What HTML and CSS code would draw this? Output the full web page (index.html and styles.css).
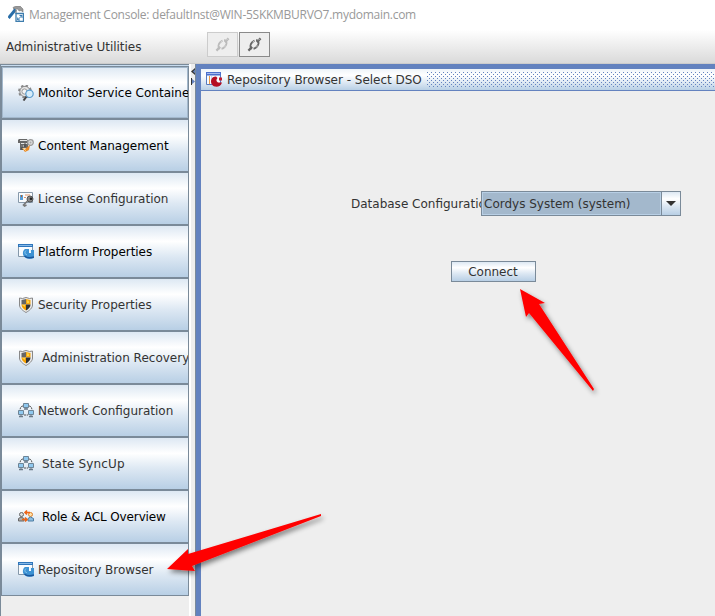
FILE: index.html
```html
<!DOCTYPE html>
<html lang="en">
<head>
<meta charset="utf-8">
<title>Management Console</title>
<link rel="stylesheet" href="styles.css">
</head>
<body>
<svg class="defs" width="0" height="0" aria-hidden="true">
  <defs>
    <symbol id="gear" viewBox="0 0 16 16">
      <circle cx="7" cy="6.5" r="5.2" fill="#e4e4e4" stroke="#8a8a8a" stroke-width="1"/>
      <circle cx="7" cy="6.5" r="6" fill="none" stroke="#888" stroke-width="1.8" stroke-dasharray="2.4 2.3"/>
      <circle cx="6.5" cy="6.5" r="2.6" fill="#f4f4f4" stroke="#999"/>
      <path d="M9 11 5.5 15.5" stroke="#444" stroke-width="2"/>
      <circle cx="11.5" cy="8.8" r="3.7" fill="#d5ecfa" stroke="#5a9bcd" stroke-width="1.2"/>
    </symbol>
    <symbol id="content" viewBox="0 0 16 16">
      <path d="M1 1h8l1 2v9H2V5H0V2z" fill="#686868"/>
      <path d="M2 2.5h7M3 5.5h6M3 8h3M4 10.5h4" stroke="#e5e5e5"/>
      <path d="M4 7v5M7 5v4" stroke="#444"/>
      <circle cx="12.5" cy="4.5" r="2.8" fill="#ddd" stroke="#999" stroke-width="1.200"/>
      <circle cx="12.5" cy="4.5" r="1" fill="#aaa"/>
      <path d="m4 10 3 1 5-4-1 5-4 2z" fill="#e98824"/><path d="m5 10.5 3 2" stroke="#ffe090"/>
    </symbol>
    <symbol id="license" viewBox="0 0 16 16">
      <path d="M.5 1.5h14v10H.5z" fill="#f9fbfd" stroke="#8799aa"/>
      <path d="M2 4h3v5H2z" fill="#579dd7"/><path d="M3 4h1v2H3z" fill="#b56732"/>
      <path d="M7 4h5M6 6.5h2" stroke="#df956d"/>
      <circle cx="12" cy="8" r="3" fill="#888" stroke="#555"/><circle cx="13" cy="7.8" r="1.3" fill="#222"/>
      <path d="m9.5 10-4 4 1 1 2-1" fill="none" stroke="#777" stroke-width="1.6"/>
    </symbol>
    <symbol id="browser" viewBox="0 0 16 16">
      <path d="M.5.5h14v12H.5z" fill="#f8fbfe" stroke="#8498aa"/><path d="M0 0h15v3H0z" fill="#2d75bb"/><path d="M1 1.500h13" stroke="#85b8e7"/>
      <path d="M7 5C5 6 4 10 6 12.500c2 2.500 6 3 10 1.500V6h-3v3h-2V5z" fill="#3d92d3"/><path d="M8 6.500c-2 2-1 4 1 4" fill="none" stroke="#8bcaf1"/><path d="M6.500 12c3 2.500 6 2 9.500 1" stroke="#1b569b" stroke-width="1.500" fill="none"/><path d="M12 5h1v3h-1z" fill="#e4f4ff"/>
    </symbol>
    <symbol id="red-browser" viewBox="0 0 16 16">
      <path d="M.5.5h14v12H.5z" fill="#f8fbfe" stroke="#577abd"/><path d="M0 0h15v3.500H0z" fill="#4c70cc"/><path d="M1 1.500h13" stroke="#a7bbef"/>
      <path d="M3.500 4v8" stroke="#ec9a45"/><path d="M5.500 4v8" stroke="#c8d4ee"/>
      <path d="M10 4.500c-5 0-6 5-4 8 2 3.500 9 3 10-2h-4c-2-1-2-3-.5-4.500z" fill="#b50e22"/><path d="M13 5.500h3v3h-3z" fill="#c21b2e"/>
    </symbol>
    <symbol id="shield" viewBox="0 0 16 16">
      <path d="m1.500 1 3 .5L8 .5l3.500 1 3-.5v7c0 3-3 5.500-6.500 7.500C4.500 13.500 1.500 11 1.500 8z" fill="#ededed" stroke="#888"/>
      <path d="M3.500 3 8 2v5.500H3.500z" fill="#666"/><path d="m8 2 4.500 1v4.500H8z" fill="#f5a611"/><path d="M3.500 7.500H8v6c-3-1.800-4.500-3.500-4.500-6z" fill="#f6a100"/><path d="M8 7.500h4.500c0 2.500-1.500 4.200-4.500 6z" fill="#333"/><path d="m9 3 2 1v2H9zM4 8h3v2z" fill="#ffd342"/>
    </symbol>
    <symbol id="network" viewBox="0 0 16 16">
      <path d="M5 3C3 3 2 5 2 7M11 3c2 0 3 2 3 4M6 12h4" fill="none" stroke="#555" stroke-dasharray="2 .7"/>
      <g fill="#8fc8ef" stroke="#6d8496"><path d="M5.500.5h5v4h-5zM.5 7.500h5v4h-5zM10.500 7.500h5v4h-5z"/></g>
      <path d="M6 6h4M1 13.500h4M11 13.500h4" stroke="#697988" stroke-width="1.3"/><path d="M8 5v1M3 12v1M13 12v1" stroke="#697988"/>
    </symbol>
    <symbol id="roles" viewBox="0 0 16 16">
      <circle cx="3.500" cy="5.500" r="2" fill="#ddd" stroke="#666"/><path d="M.5 12V9.500L3 8l3 1.500V12z" fill="#aaa" stroke="#666"/>
      <circle cx="12.500" cy="5.500" r="2" fill="#ffe0a8" stroke="#df8027"/><path d="M10 12V9.500L12.500 8l3 1.500V12z" fill="#8bbde1" stroke="#4e7da3"/>
      <path d="M12 3.500H7M9 1.500l-2 2 2 2M4 10.500h5M7 8.500l2 2-2 2" fill="none" stroke="#ed6417" stroke-width="1.600"/>
    </symbol>
    <symbol id="plug" viewBox="0 0 16 16">
      <path d="m1.500 14.500 4-4M10.500 5.500l4-4" stroke="currentColor" stroke-width="2.400"/>
      <ellipse cx="8" cy="8" rx="5.300" ry="3.400" transform="rotate(-50 8 8)" fill="none" stroke="currentColor" stroke-width="2" stroke-dasharray="11 1.500"/>
      <path d="m6 5.500 2-1.500M10 11l1.500-2M12 3.500l1.500-1.500" stroke="#ddd" stroke-width=".8"/>
    </symbol>
    <filter id="shade" x="-20%" y="-20%" width="150%" height="150%"><feDropShadow dx="2" dy="3" stdDeviation="2.500" flood-color="#000" flood-opacity=".48"/></filter>
  </defs>
</svg>
<div class="window">
  <header class="titlebar">
    <svg class="app-icon" viewBox="0 0 16 16">
      <path d="m5 1.500 3-1.500h4l3 3v3l-2-1.500-2 .5-1-2-4 .5z" fill="#999" stroke="#777" stroke-width=".6"/>
      <path d="m7.500 3.500-7 8.500" stroke="#286da8" stroke-width="3"/><path d="M8 4v4" stroke="#888" stroke-width="1.300"/>
      <path d="M8 7.500h7.500v8H8z" fill="#fff" stroke="#3e7dad" stroke-width="1.300"/>
      <path d="m9.500 14 4.500-4.500M9.700 11.500V14H12M11.500 9.500H14V12" fill="none" stroke="#3479b1"/>
    </svg>
    <span class="title">Management Console: defaultInst@WIN-5SKKMBURVO7.mydomain.com</span>
  </header>
  <div class="toolbar">
    <span class="toolbar-label">Administrative Utilities</span>
    <div class="tools">
      <button class="tool disabled" aria-label="Disconnect"><svg><use href="#plug"/></svg></button>
      <button class="tool" aria-label="Connection"><svg><use href="#plug"/></svg></button>
    </div>
  </div>
  <main class="workspace">
    <nav class="sidebar">
      <button class="item dark focused"><svg><use href="#gear"/></svg><span>Monitor Service Container</span></button>
      <button class="item dark"><svg><use href="#content"/></svg><span>Content Management</span></button>
      <button class="item"><svg><use href="#license"/></svg><span>License Configuration</span></button>
      <button class="item dark"><svg><use href="#browser"/></svg><span class="snug">Platform Properties</span></button>
      <button class="item"><svg><use href="#shield"/></svg><span>Security Properties</span></button>
      <button class="item indented"><svg><use href="#shield"/></svg><span>Administration Recovery</span></button>
      <button class="item"><svg><use href="#network"/></svg><span>Network Configuration</span></button>
      <button class="item indented"><svg><use href="#network"/></svg><span class="loose">State SyncUp</span></button>
      <button class="item dark indented"><svg><use href="#roles"/></svg><span class="tight">Role &amp; ACL Overview</span></button>
      <button class="item"><svg><use href="#browser"/></svg><span class="snug">Repository Browser</span></button>
    </nav>
    <div class="divider"><svg viewBox="0 0 4 20"><path d="m4 0-4 3.500L4 7z" fill="#333"/><path d="m2 3.500 2-2v4z" fill="#6382bf"/><path d="m0 10 4 3.500L0 17z" fill="#6382bf"/><path d="M0 10h1v7H0z" fill="#333"/></svg></div>
    <section class="panel">
      <header class="panel-head"><svg class="panel-icon"><use href="#red-browser"/></svg><h1>Repository Browser - Select DSO</h1><svg class="dots" shape-rendering="crispEdges"><defs><pattern id="grip" width="4" height="4" patternUnits="userSpaceOnUse"><path d="M0 0h1v1H0zM2 2h1v1H2z" fill="#6382bf"/></pattern></defs><rect width="100%" height="100%" fill="url(#grip)"/></svg></header>
      <div class="content">
        <div class="field"><label>Database Configuration</label><div class="combo"><span class="value">Cordys System (system)</span><span class="drop"><svg viewBox="0 0 10 5"><path d="M0 0h10L5 5z"/></svg></span></div></div>
        <button class="connect">Connect</button>
      </div>
    </section>
  </main>
  <svg class="arrows" viewBox="0 0 715 616" aria-hidden="true">
    <g fill="#f00" filter="url(#shade)"><path d="m520 289 25 14-6 1 55 85-1 2-64-78-3 4z"/><path d="m167 569 21-20v5l133-40v2l-129 50 3 5z"/></g>
  </svg>
</div>
</body>
</html>
```

FILE: styles.css
```css
* { box-sizing: border-box; }
body { margin: 0; font: 12px/16px "DejaVu Sans", sans-serif; color: #333; background: #eee; }
button { font: inherit; color: inherit; margin: 0; border-radius: 0; }
.defs { position: absolute; }
.window { position: relative; width: 715px; height: 616px; overflow: hidden; display: flex; flex-direction: column; }
.titlebar { height: 30px; flex: none; display: flex; gap: 5px; padding: 6px 0 0 8px; background: #fff; }
.app-icon { width: 16px; height: 16px; }
.title { font: 12px/17px "Open Sans", sans-serif; letter-spacing: -.27px; color: #999; white-space: nowrap; }
.toolbar { height: 34px; flex: none; display: flex; align-items: flex-start; background: linear-gradient(#fff, #dadada); border-bottom: 1px solid #ccc; }
.toolbar-label { width: 201px; padding-left: 6px; margin-top: 9px; margin-right: 6px; white-space: nowrap; letter-spacing: -.04px; }
.tools { display: flex; gap: 1px; margin-top: 2px; }
.tool { width: 31px; height: 25px; padding: 0; border: 1px solid #8a8a8a; background: #eee; display: grid; place-items: center; color: #666; }
.tool svg { width: 15px; height: 15px; }
.tool.disabled { border-color: #ccc; color: #bbb; }
.workspace { flex: 1; display: flex; min-height: 0; }
.sidebar { width: 189px; flex: none; border: solid #7a8a99; border-width: 1px 0 0 1px; padding-top: 1px; background: linear-gradient(#c8dcef 0 2px, #eee 2px); }
.item { width: 188px; height: 53px; display: flex; align-items: center; gap: 4px; padding: 0 0 0 16px; border: 1px solid #7a8a99; background: linear-gradient(#dde8f3, #fff 30%, #dde8f3 60%, #b8cfe5); overflow: hidden; white-space: nowrap; text-align: left; }
.item svg { width: 16px; height: 16px; flex: none; }
.item.indented { gap: 8px; }
.item.dark { color: #000; }
.item.focused { box-shadow: inset 0 0 0 1px #a3b8cc; }
.snug { letter-spacing: -.05px; }
.tight { letter-spacing: -.13px; }
.loose { letter-spacing: .15px; }
.divider { width: 6px; flex: none; background: linear-gradient(90deg, #fff 2px, #eee 2px); padding: 4px 0 0 2px; }
.divider svg { display: block; width: 4px; height: 20px; }
.panel { flex: 1; min-width: 0; background: #eee; border-left: 5px solid #6382bf; border-top: 5px solid #6382bf; margin-left: 1px; box-shadow: -1px 0 #7a8a99; }
.panel-head { height: 22px; display: flex; align-items: center; padding-left: 5px; border-bottom: 1px solid #6382bf; background: linear-gradient(#eef4f9, #fff 30%, #dde8f3 65%, #b8cfe5); }
.panel-icon { width: 16px; height: 16px; margin-right: 5px; }
.panel h1 { margin: 0 1px 0 0; width: 199px; font: inherit; white-space: nowrap; letter-spacing: -.02px; }
.dots { flex: 1; height: 15px; }
.content { padding-left: 150px; }
.field { margin-top: 100px; display: flex; align-items: center; height: 25px; }
.field label { width: 130px; overflow: hidden; white-space: nowrap; }
.combo { width: 200px; height: 25px; display: flex; border: 1px solid #7a8a99; background: #b8cfe5; }
.value { width: 177px; margin: 1px; padding: 3px 0 0 1px; background: #a3b8cc; white-space: nowrap; }
.drop { flex: 1; display: grid; place-items: center; border-left: 1px solid #7a8a99; background: linear-gradient(#dde8f3, #fff 30%, #dde8f3 60%, #b8cfe5); }
.drop svg { width: 10px; height: 5px; margin-right: 1px; fill: #333; }
.connect { display: block; width: 85px; height: 21px; margin: 45px 0 0 100px; padding: 0 1px 0 0; border: 1px solid #7a8a99; background: linear-gradient(#dde8f3, #fff 30%, #dde8f3 60%, #b8cfe5); }
.arrows { position: absolute; inset: 0; width: 715px; height: 616px; pointer-events: none; }
```
